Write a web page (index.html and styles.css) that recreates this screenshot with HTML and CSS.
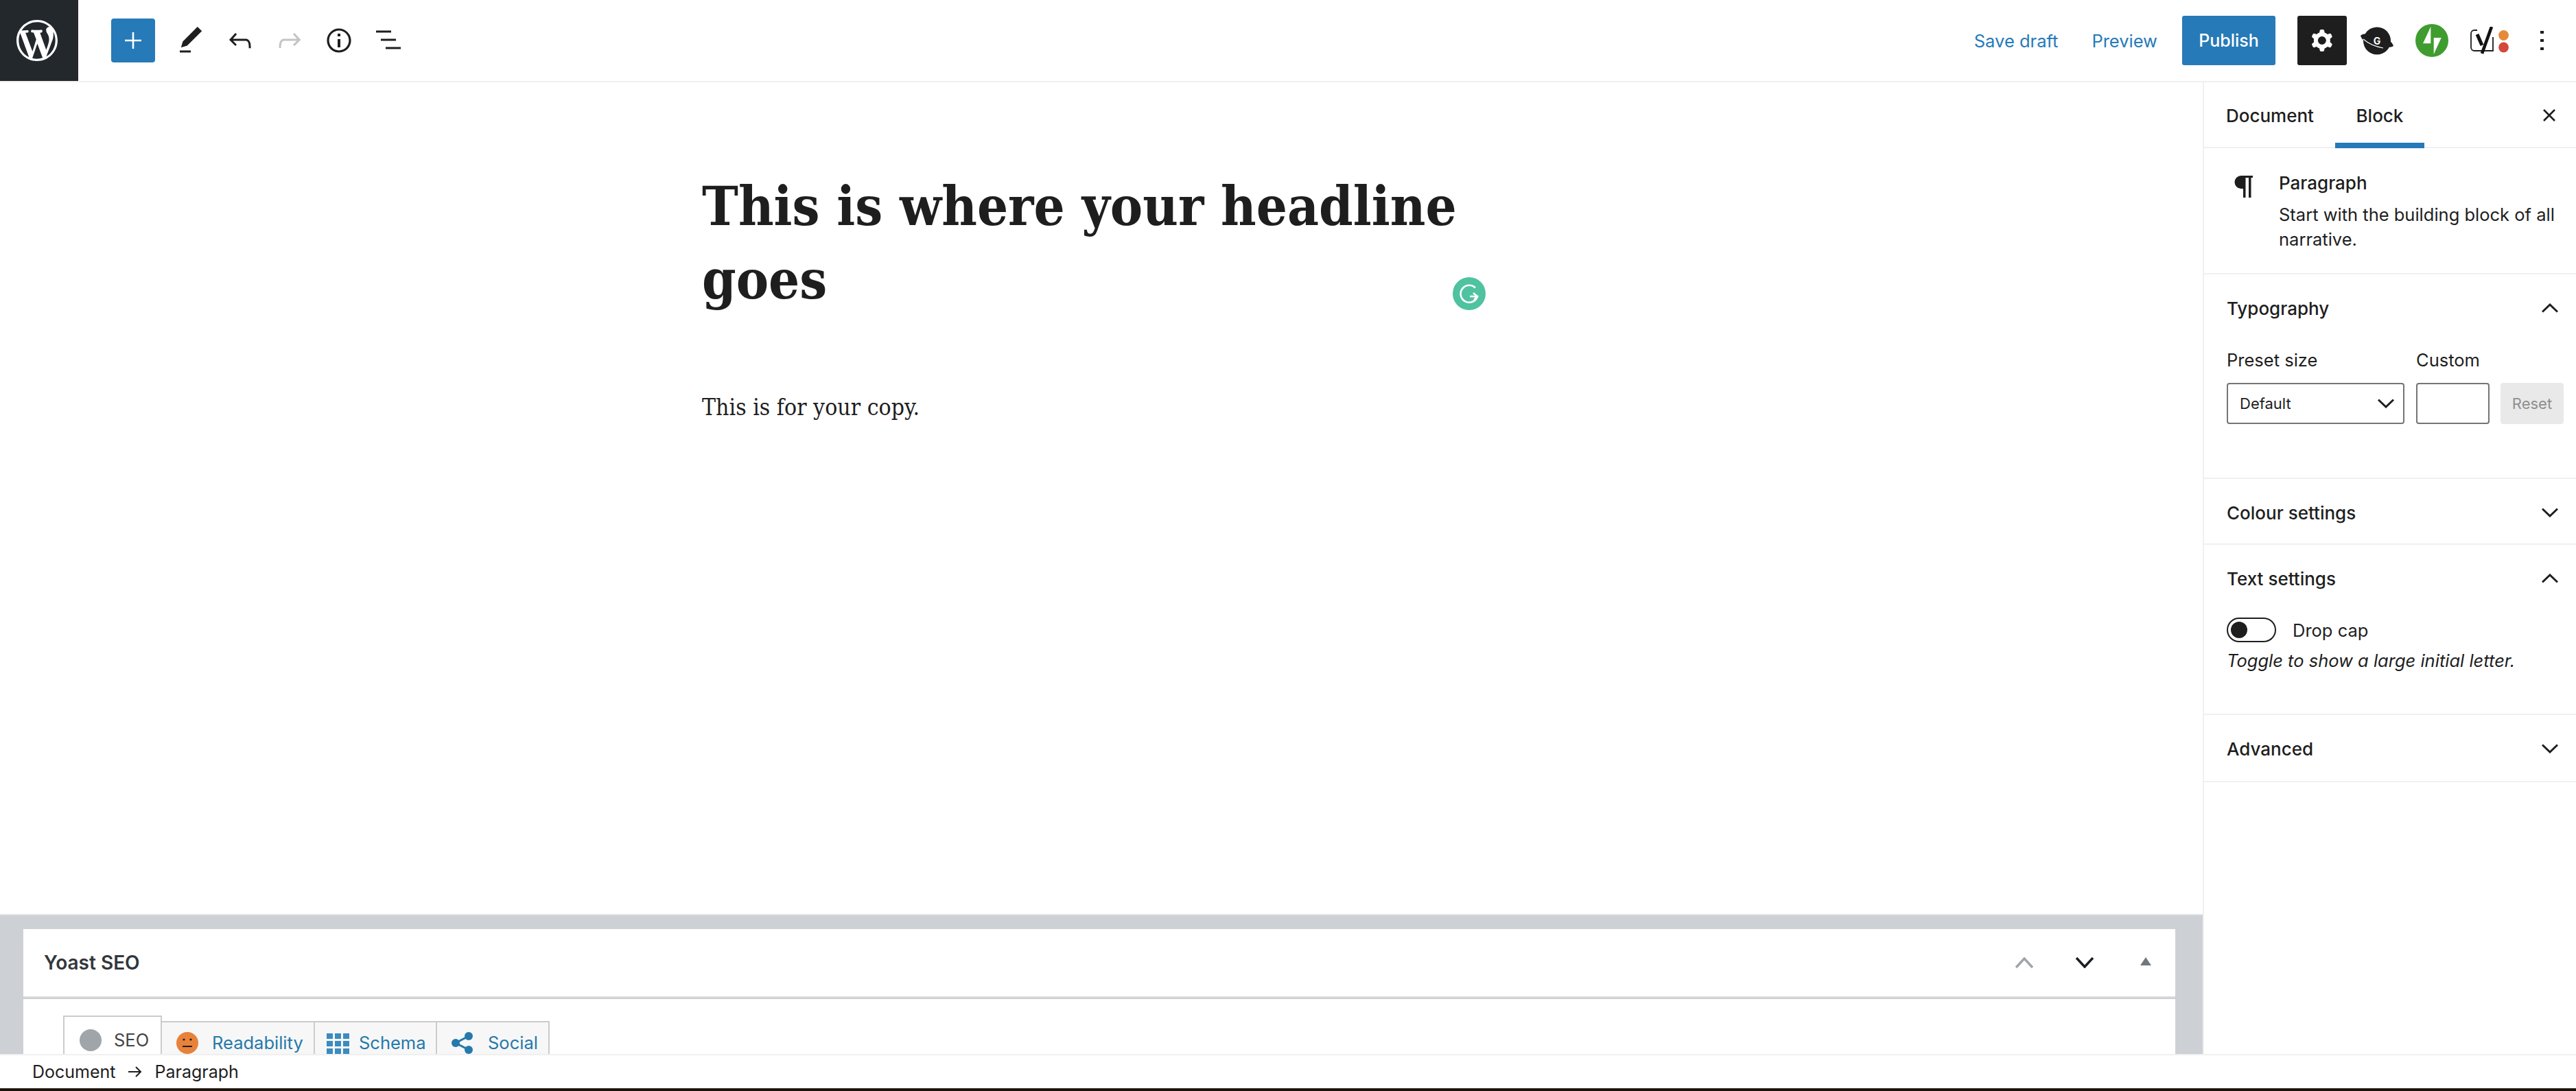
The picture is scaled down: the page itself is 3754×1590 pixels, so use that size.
FILE: index.html
```html
<!DOCTYPE html>
<html lang="en">
  <head>
    <meta charset="UTF-8" />
    <title>Edit Post</title>
    <link rel="stylesheet" href="styles.css">
  </head>
  <body>
    <div class="page">
      <header class="topbar">
        <a class="wp-logo">
          <svg viewBox="0 0 20 20" width="60" height="60"><path fill="#fff" d="M20 10c0-5.51-4.49-10-10-10C4.48 0 0 4.49 0 10c0 5.52 4.48 10 10 10 5.51 0 10-4.48 10-10zM7.78 15.37L4.37 6.22c.55-.02 1.17-.08 1.17-.08.5-.06.44-1.13-.06-1.11 0 0-1.45.11-2.37.11-.18 0-.37 0-.58-.01C4.12 2.69 6.87 1.11 10 1.11c2.33 0 4.45.87 6.05 2.34-.68-.11-1.65.39-1.65 1.58 0 .74.45 1.36.9 2.1.35.61.55 1.36.55 2.46 0 1.49-1.4 5-1.4 5l-3.03-8.37c.54-.02.82-.17.82-.17.5-.05.44-1.25-.06-1.22 0 0-1.44.12-2.38.12-.87 0-2.33-.12-2.33-.12-.5-.03-.56 1.2-.06 1.22l.92.08 1.26 3.41zM17.41 10c.24-.64.74-1.87.43-4.25.7 1.29 1.05 2.71 1.05 4.25 0 3.29-1.73 6.24-4.4 7.78.97-2.59 1.94-5.2 2.92-7.78zM6.1 18.09C3.12 16.65 1.11 13.53 1.11 10c0-1.3.23-2.48.72-3.59C3.25 10.3 4.67 14.2 6.1 18.09zm4.03-6.63l2.58 6.98c-.86.29-1.76.45-2.71.45-.79 0-1.57-.11-2.29-.33.81-2.38 1.62-4.74 2.42-7.1z"/></svg>
        </a>
        <button class="add-btn">
          <svg viewBox="0 0 24 24" width="24" height="24"><path fill="#fff" d="M10.7 0h2.6v10.7H24v2.6H13.3V24h-2.6V13.3H0v-2.6h10.7z"/></svg>
        </button>
        <div class="tools">
          <span class="tool"><svg viewBox="0 0 24 24" width="48" height="48"><path d="M20.1 5.1L16.9 2 6.2 12.7l-1.3 4.4 4.5-1.3L20.1 5.1zM4 20.8h8v-1.5H4v1.5z"/></svg></span>
          <span class="tool"><svg viewBox="0 0 24 24" width="48" height="48"><path d="M18.3 11.7c-.6-.6-1.4-.9-2.3-.9H6.7l2.9-3.3-1.1-1-4.5 5L8.5 16l1-1-2.7-2.7H16c.5 0 .9.2 1.3.5 1 1 1 3.4 1 4.5v.3h1.5v-.2c0-1.5 0-4.3-1.5-5.7z"/></svg></span>
          <span class="tool tool-off"><svg viewBox="0 0 24 24" width="48" height="48"><path d="M15.6 6.5l-1.1 1 2.9 3.3H8c-.9 0-1.7.3-2.3.9-1.4 1.5-1.4 4.2-1.4 5.6v.2h1.5v-.3c0-1.1 0-3.5 1-4.5.3-.3.7-.5 1.3-.5h9.2L14.5 15l1.1 1.1 4.6-4.6-4.6-5z"/></svg></span>
          <span class="tool"><svg viewBox="0 0 24 24" width="48" height="48"><path d="M12 3.2c-4.8 0-8.8 3.9-8.8 8.8 0 4.8 3.9 8.8 8.8 8.8 4.8 0 8.8-3.9 8.8-8.8 0-4.8-4-8.8-8.8-8.8zm0 16c-4 0-7.2-3.3-7.2-7.2C4.8 8 8 4.8 12 4.8s7.2 3.3 7.2 7.2c0 4-3.2 7.2-7.2 7.2zM11 17h2v-6h-2v6zm0-8h2V7h-2v2z"/></svg></span>
          <span class="tool"><svg viewBox="0 0 24 24" width="48" height="48"><path d="M3 4.8h11v1.5H3zM6.5 10.8h11v1.5h-11zM10 16.8h11v1.5H10z"/></svg></span>
        </div>
        <div class="actions">
          <a class="link-btn save-link">Save draft</a>
          <a class="link-btn preview-link">Preview</a>
          <button class="publish-btn">Publish</button>
          <button class="settings-btn">
            <svg viewBox="0 0 24 24" width="48" height="48"><path fill="#fff" fill-rule="evenodd" d="M10.289 4.836A1 1 0 0111.275 4h1.306a1 1 0 01.987.836l.244 1.466c.787.26 1.503.679 2.108 1.218l1.393-.522a1 1 0 011.216.437l.653 1.13a1 1 0 01-.23 1.273l-1.148.944a6.025 6.025 0 010 2.435l1.149.946a1 1 0 01.23 1.272l-.653 1.13a1 1 0 01-1.216.437l-1.394-.522c-.605.54-1.32.958-2.108 1.218l-.244 1.466a1 1 0 01-.987.836h-1.306a1 1 0 01-.986-.836l-.244-1.466a5.995 5.995 0 01-2.108-1.218l-1.394.522a1 1 0 01-1.217-.436l-.653-1.131a1 1 0 01.23-1.272l1.149-.946a6.026 6.026 0 010-2.435l-1.148-.944a1 1 0 01-.23-1.272l.653-1.131a1 1 0 011.217-.437l1.393.522a5.994 5.994 0 012.108-1.218l.244-1.466zM14.929 12a3 3 0 11-6 0 3 3 0 016 0z"/></svg>
          </button>
          <svg class="plugin-icon g-icon" viewBox="0 0 48 41" width="48" height="41">
            <circle cx="24" cy="20.5" r="20" fill="#1e1e1e"/>
            <path fill="#1e1e1e" d="M0 13c2-2 5-3 8-2l2 12C5 21 1 17 0 13zM36 30c5 0 9 0 12-2-1-3-3-6-6-8z"/>
            <path fill="none" stroke="#fff" stroke-width="1.1" d="M4 18c8 7 18 11 29 13"/>
            <text x="24" y="25.5" class="g-letter">G</text>
          </svg>
          <svg class="plugin-icon jp-icon" viewBox="0 0 48 48" width="48" height="48">
            <circle cx="24" cy="24" r="24" fill="#3f9c2f"/>
            <path fill="#fff" d="M22.3 4v24.3H11zM26.7 20h11L26.7 44z"/>
          </svg>
          <svg class="plugin-icon yoast-icon" viewBox="0 0 56 40" width="56" height="40">
            <path fill="none" stroke="#1e1e1e" stroke-width="1.8" d="M10 5H6a5 5 0 0 0-5 5v20a5 5 0 0 0 5 5h27V15"/>
            <path fill="none" stroke="#111" stroke-width="4.6" d="M31 0L17 39"/>
            <path fill="none" stroke="#111" stroke-width="5" d="M10 11l7 16"/>
            <circle cx="48.5" cy="12.5" r="7.4" fill="#e58a39"/>
            <circle cx="48.5" cy="30" r="7.4" fill="#d3483b"/>
          </svg>
          <svg class="plugin-icon more-icon" viewBox="0 0 6 28" width="6" height="28"><path fill="#1e1e1e" d="M0 0h5v4H0zM0 12h5v4H0zM0 24h5v4H0z"/></svg>
        </div>
      </header>

      <div class="main">
        <div class="editor">
          <div class="content">
            <div class="writing">
              <h1 class="title">This is where your headline goes</h1>
              <p class="copy">This is for your copy.</p>
              <svg class="grammarly" viewBox="0 0 48 48" width="48" height="48">
                <circle cx="24" cy="24" r="24" fill="#4fc2a0"/>
                <path fill="none" stroke="#fff" stroke-width="2.6" d="M33 15.5A12.5 12.5 0 1 0 36 28H25"/>
                <path fill="none" stroke="#fff" stroke-width="2.6" d="M30 23l6 5-5 5"/>
              </svg>
            </div>
          </div>
          <div class="metabox-area">
            <div class="metabox">
              <div class="metabox-head">
                <h2>Yoast SEO</h2>
                <div class="metabox-ctrls">
                  <svg viewBox="0 0 28 16" width="28" height="16"><polyline points="2,15 14,2 26,15" fill="none" stroke="#a0a5aa" stroke-width="3.5"/></svg>
                  <svg viewBox="0 0 28 16" width="28" height="16"><polyline points="2,1 14,14 26,1" fill="none" stroke="#191e23" stroke-width="3.5"/></svg>
                  <svg class="sort-tri" viewBox="0 0 16 12" width="16" height="12"><path fill="#72777c" d="M8 0l8 12H0z"/></svg>
                </div>
              </div>
              <div class="metabox-rule"></div>
              <div class="yoast-tabs">
                <div class="yoast-tab yoast-tab-active">
                  <span class="seo-dot"></span>
                  <span>SEO</span>
                </div>
                <div class="yoast-tab read-tab">
                  <svg viewBox="0 0 32 32" width="32" height="32">
                    <circle cx="16" cy="16" r="16" fill="#e8813a"/>
                    <circle cx="11" cy="11" r="1.6" fill="#1e1e1e"/>
                    <circle cx="21" cy="11" r="1.6" fill="#1e1e1e"/>
                    <path fill="#1e1e1e" d="M9 20h14v2H9z"/>
                  </svg>
                  <span>Readability</span>
                </div>
                <div class="yoast-tab schema-tab">
                  <div class="schema-grid"><i></i><i></i><i></i><i></i><i></i><i></i><i></i><i></i><i></i></div>
                  <span>Schema</span>
                </div>
                <div class="yoast-tab social-tab">
                  <svg viewBox="0 0 32 32" width="32" height="32">
                    <circle cx="25" cy="6" r="6" fill="#2579ab"/>
                    <circle cx="6" cy="16" r="6" fill="#2579ab"/>
                    <circle cx="25" cy="26" r="6" fill="#2579ab"/>
                    <path fill="none" stroke="#2579ab" stroke-width="3" d="M25 6L6 16l19 10"/>
                  </svg>
                  <span>Social</span>
                </div>
              </div>
            </div>
          </div>
        </div>

        <aside class="sidebar">
          <div class="side-tabs">
            <span class="side-tab">Document</span>
            <span class="side-tab side-tab-active">Block</span>
            <svg class="side-close" viewBox="0 0 20 20" width="20" height="20"><path fill="none" stroke="#1e1e1e" stroke-width="2.6" d="M2 2l16 16M18 2L2 18"/></svg>
          </div>
          <div class="block-card">
            <svg class="pilcrow" viewBox="0 0 27 32" width="27" height="32"><path fill="#1e1e1e" d="M27 0H10a9.5 9.5 0 0 0 0 19h3v13h3.5V3H21v29h3.5V3H27z"/></svg>
            <div class="block-info">
              <div class="block-name">Paragraph</div>
              <div class="block-desc">Start with the building block of all narrative.</div>
            </div>
          </div>
          <section class="panel panel-typo">
            <div class="panel-head">
              <span>Typography</span>
              <svg class="chev" viewBox="0 0 24 14" width="24" height="14"><polyline points="1,12.5 12,2 23,12.5"/></svg>
            </div>
            <div class="typo-row">
              <div class="typo-col">
                <label>Preset size</label>
                <div class="select-box">
                  <span>Default</span>
                  <svg class="chev" viewBox="0 0 24 14" width="24" height="14"><polyline points="1,1.5 12,12 23,1.5"/></svg>
                </div>
              </div>
              <div class="typo-col">
                <label>Custom</label>
                <div class="custom-input"></div>
              </div>
              <button class="reset-btn">Reset</button>
            </div>
          </section>
          <section class="panel panel-closed">
            <div class="panel-head">
              <span>Colour settings</span>
              <svg class="chev" viewBox="0 0 24 14" width="24" height="14"><polyline points="1,1.5 12,12 23,1.5"/></svg>
            </div>
          </section>
          <section class="panel panel-text">
            <div class="panel-head">
              <span>Text settings</span>
              <svg class="chev" viewBox="0 0 24 14" width="24" height="14"><polyline points="1,12.5 12,2 23,12.5"/></svg>
            </div>
            <div class="toggle-row">
              <span class="toggle"><span class="toggle-thumb"></span></span>
              <span>Drop cap</span>
            </div>
            <p class="toggle-help">Toggle to show a large initial letter.</p>
          </section>
          <section class="panel panel-advanced">
            <div class="panel-head">
              <span>Advanced</span>
              <svg class="chev" viewBox="0 0 24 14" width="24" height="14"><polyline points="1,1.5 12,12 23,1.5"/></svg>
            </div>
          </section>
        </aside>
      </div>

      <footer class="crumbs">
        <span>Document</span>
        <svg viewBox="0 0 20 18" width="20" height="18"><path fill="none" stroke="#1e1e1e" stroke-width="2" d="M0 9h18M11 2l7 7-7 7"/></svg>
        <span>Paragraph</span>
      </footer>
      <div class="desk-strip"></div>
    </div>
  </body>
</html>
```

FILE: styles.css
```css
* {
  box-sizing: border-box;
}
html,
body {
  margin: 0;
  height: 100%;
  overflow: hidden;
}
body {
  font-family: "Inter", "Liberation Sans", sans-serif;
  color: #1e1e1e;
  background-color: white;
}
button {
  font-family: inherit;
  border: none;
  padding: 0;
}
.page {
  display: flex;
  flex-direction: column;
  height: 100vh;
}

/* top bar */
.topbar {
  display: flex;
  align-items: center;
  flex: none;
  height: 120px;
  border-bottom: 2px solid #f0f0f0;
}
.wp-logo {
  display: flex;
  align-items: center;
  justify-content: center;
  width: 114px;
  height: 118px;
  padding-right: 6px;
  background-color: #23282d;
}
.add-btn {
  display: flex;
  align-items: center;
  justify-content: center;
  width: 64px;
  height: 64px;
  margin-left: 48px;
  border-radius: 4px;
  background-color: #267ab8;
}
.tools {
  display: flex;
  margin-left: 16px;
}
.tool {
  display: flex;
  padding: 0 12px;
  fill: #1e1e1e;
}
.tool-off {
  fill: #c4c4c4;
}
.actions {
  display: flex;
  align-items: center;
  margin-left: auto;
}
.link-btn {
  font-size: 25.5px;
  color: #267ab8;
}
.save-link {
  margin-right: 49px;
}
.preview-link {
  margin-right: 36px;
}
.publish-btn {
  width: 136px;
  height: 72px;
  border-radius: 3px;
  font-size: 25px;
  font-weight: 500;
  color: white;
  background-color: #267ab8;
}
.settings-btn {
  display: flex;
  align-items: center;
  justify-content: center;
  width: 72px;
  height: 72px;
  margin-left: 32px;
  border-radius: 3px;
  background-color: #1e1e1e;
}
.plugin-icon {
  flex: none;
}
.g-icon {
  margin-left: 20px;
}
.g-letter {
  font-family: "Inter", sans-serif;
  font-size: 14px;
  font-weight: 700;
  fill: white;
  text-anchor: middle;
}
.jp-icon {
  margin-left: 32px;
}
.yoast-icon {
  margin-left: 32px;
}
.more-icon {
  margin-left: 46px;
  margin-right: 46px;
}

/* editor */
.main {
  display: flex;
  flex: 1;
  min-height: 0;
}
.editor {
  display: flex;
  flex-direction: column;
  flex: 1;
  min-width: 0;
}
.content {
  flex: 1;
  padding-top: 127px;
}
.writing {
  position: relative;
  width: 1140px;
  margin-left: 1023px;
}
.title {
  margin: 0;
  font-family: "DejaVu Serif Condensed", "DejaVu Serif", serif;
  font-stretch: condensed;
  font-size: 79px;
  font-weight: 700;
  line-height: 107px;
  color: #1e1e1e;
}
.copy {
  margin: 108px 0 0;
  font-family: "DejaVu Serif Condensed", "DejaVu Serif", serif;
  font-stretch: condensed;
  font-size: 33.5px;
  line-height: 50px;
  color: #1e1e1e;
}
.grammarly {
  position: absolute;
  top: 157px;
  left: 1094px;
}

/* metabox */
.metabox-area {
  flex: none;
  height: 204px;
  padding: 20px 40px 0 34px;
  overflow: hidden;
  border-top: 2px solid #e2e4e7;
  background-color: #cdd0d4;
}
.metabox {
  height: 100%;
  background-color: white;
}
.metabox-head {
  display: flex;
  align-items: center;
  justify-content: space-between;
  height: 98px;
  padding: 0 35px 0 30px;
}
.metabox-head h2 {
  margin: 0;
  font-size: 28px;
  font-weight: 600;
  color: #32373c;
}
.metabox-ctrls {
  display: flex;
  align-items: flex-start;
  gap: 60px;
}
.sort-tri {
  margin-left: 7px;
}
.metabox-rule {
  height: 4px;
  background: linear-gradient(#ddd 50%, #ccd0d4 50%);
}
.yoast-tabs {
  display: flex;
  align-items: flex-start;
  padding: 24px 0 0 58px;
}
.yoast-tab {
  display: flex;
  align-items: flex-start;
  height: 72px;
  margin-top: 8px;
  padding-top: 14px;
  border: 2px solid #ccc;
  border-left: none;
  border-bottom: none;
  font-size: 25.5px;
  line-height: 32px;
  color: #2579ab;
  background-color: #f7f7f7;
}
.yoast-tab-active {
  height: 80px;
  width: 144px;
  margin-top: 0;
  padding: 18px 0 0 22px;
  border-left: 2px solid #ccc;
  color: #444;
  background-color: white;
}
.seo-dot {
  width: 32px;
  height: 32px;
  margin-right: 18px;
  border-radius: 50%;
  background-color: #a0a5aa;
}
.read-tab {
  width: 223px;
  padding-left: 21px;
  gap: 20px;
}
.schema-tab {
  width: 178px;
  padding-left: 17px;
  gap: 14px;
}
.social-tab {
  width: 164px;
  padding-left: 21px;
  gap: 21px;
}
.schema-grid {
  display: grid;
  grid-template-columns: repeat(3, 9px);
  grid-auto-rows: 8px;
  gap: 3px;
  padding-top: 2px;
}
.schema-grid i {
  background-color: #3a8cc0;
}

/* sidebar */
.sidebar {
  flex: none;
  width: 544px;
  border-left: 2px solid #f0f0f0;
}
.side-tabs {
  display: flex;
  align-items: flex-start;
  height: 96px;
  padding-left: 32px;
  border-bottom: 2px solid #f0f0f0;
  font-size: 26px;
}
.side-tab {
  display: flex;
  align-items: center;
  height: 96px;
  font-weight: 500;
}
.side-tab-active {
  justify-content: center;
  width: 130px;
  margin-left: 31px;
  padding-top: 8px;
  border-bottom: 8px solid #267ab8;
}
.side-close {
  margin: 38px 29px 0 auto;
}
.block-card {
  display: flex;
  height: 184px;
  padding: 40px 10px 0 44px;
  border-bottom: 2px solid #f0f0f0;
}
.pilcrow {
  flex: none;
  margin-right: 38px;
}
.block-name {
  font-size: 26px;
  font-weight: 500;
  line-height: 22px;
}
.block-desc {
  margin-top: 17px;
  font-size: 25.5px;
  line-height: 36px;
}
.panel {
  padding: 0 26px 0 33px;
  border-bottom: 2px solid #f0f0f0;
}
.panel-head {
  display: flex;
  align-items: center;
  justify-content: space-between;
  height: 98px;
  font-size: 26px;
  font-weight: 500;
}
.chev {
  flex: none;
  fill: none;
  stroke: #1e1e1e;
  stroke-width: 3;
}
.panel-typo {
  height: 298px;
}
.panel-closed {
  height: 96px;
}
.panel-text {
  height: 248px;
}
.panel-advanced {
  height: 98px;
}
.typo-row {
  display: flex;
  align-items: flex-end;
  margin-top: 11px;
  margin-right: -8px;
}
.typo-col label {
  display: block;
  margin-bottom: 17px;
  font-size: 25.5px;
  line-height: 32px;
}
.select-box {
  display: flex;
  align-items: center;
  justify-content: space-between;
  width: 259px;
  height: 60px;
  padding: 0 13px 0 17px;
  border: 2px solid #757575;
  border-radius: 4px;
  font-size: 22px;
}
.typo-col + .typo-col {
  margin-left: 17px;
}
.custom-input {
  width: 107px;
  height: 60px;
  border: 2px solid #757575;
  border-radius: 4px;
}
.reset-btn {
  flex: none;
  width: 92px;
  height: 60px;
  margin-left: 16px;
  border-radius: 4px;
  font-size: 22px;
  color: #8f8f8f;
  background-color: #e9e9e9;
}
.toggle-row {
  display: flex;
  align-items: center;
  gap: 24px;
  margin-top: 8px;
  font-size: 25.5px;
}
.toggle {
  display: flex;
  align-items: center;
  width: 72px;
  height: 36px;
  padding-left: 4px;
  border: 2px solid #1e1e1e;
  border-radius: 18px;
}
.toggle-thumb {
  width: 24px;
  height: 24px;
  border-radius: 50%;
  background-color: #1e1e1e;
}
.toggle-help {
  margin: 11px 0 0;
  font-size: 25.5px;
  font-style: italic;
  line-height: 32px;
}

/* breadcrumbs */
.crumbs {
  display: flex;
  align-items: center;
  flex: none;
  height: 50px;
  padding-left: 47px;
  border-top: 2px solid #f0f0f0;
  font-size: 25px;
}
.crumbs svg {
  margin: 0 19px 0 18px;
}
.desk-strip {
  flex: none;
  height: 4px;
  background-color: #1c130d;
}
```
